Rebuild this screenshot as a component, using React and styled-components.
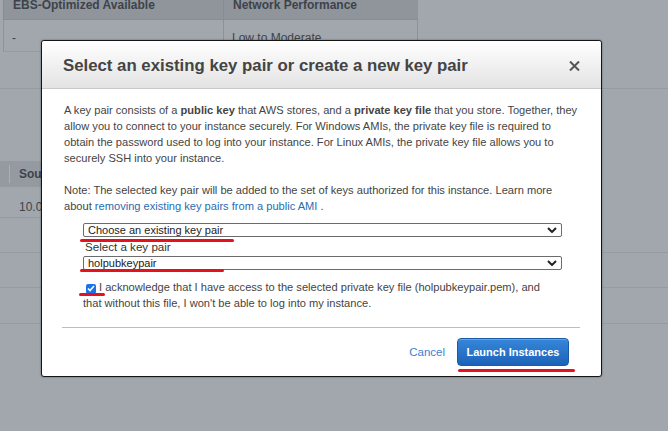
import React from "react";
import styled, { createGlobalStyle } from "styled-components";

const GlobalStyle = createGlobalStyle`
  html, body {
    margin: 0;
    padding: 0;
  }
  body {
    font-family: "Liberation Sans", Arial, sans-serif;
  }
`;

const Page = styled.div`
  position: relative;
  width: 668px;
  height: 431px;
  overflow: hidden;
  background: #a1a7ad;
`;

const TopSection = styled.div`
  height: 88px;
  border-bottom: 1px solid #959ba1;
`;

const TopTable = styled.div`
  width: 415px;
  margin-left: 3px;
  display: grid;
  grid-template-columns: 220px 195px;
`;

const HeadCell = styled.div`
  height: 20px;
  background: #8f959b;
  border-left: 1px solid #868c92;
  border-bottom: 1px solid #878d93;
  box-sizing: border-box;
  padding-left: 9px;
  font-size: 12px;
  font-weight: bold;
  line-height: 10px;
  color: #3e434a;
  &:last-child {
    border-right: 1px solid #868c92;
  }
`;

const DataCell = styled.div`
  height: 32px;
  border-left: 1px solid #8c9298;
  border-bottom: 1px solid #959ba1;
  box-sizing: border-box;
  padding: 11px 0 0 8px;
  font-size: 12px;
  color: #3e434a;
  &:last-child {
    border-right: 1px solid #8c9298;
  }
`;

const LowerSection = styled.div`
  padding-top: 72px;
`;

const LowerHead = styled.div`
  width: 560px;
  height: 26px;
  background: #949aa0;
  display: flex;
  align-items: center;
`;

const HeadDivider = styled.span`
  width: 1px;
  height: 18px;
  margin-left: 9px;
  background: #aab0b6;
`;

const LowerHeadText = styled.span`
  margin-left: 9px;
  font-size: 12px;
  font-weight: bold;
  color: #3e434a;
`;

const LowerRow = styled.div`
  width: ${(p) => p.$width || "668px"};
  height: ${(p) => p.$height}px;
  border-bottom: 1px solid #959ba1;
  box-sizing: border-box;
  padding: 13px 0 0 19px;
  font-size: 12px;
  color: #3e434a;
`;

// modal
const Modal = styled.div`
  position: absolute;
  left: 41px;
  top: 40px;
  width: 561px;
  height: 337px;
  box-sizing: border-box;
  background: #fff;
  border: 1px solid #151515;
  border-radius: 3px;
  box-shadow: 0 0 2px rgba(0, 0, 0, 0.45);
  display: flex;
  flex-direction: column;
  color: #444;
`;

const Header = styled.div`
  height: 48px;
  flex: none;
  box-sizing: border-box;
  padding: 2px 21px 0 21px;
  display: flex;
  align-items: center;
  justify-content: space-between;
  background: linear-gradient(#ffffff, #e3e3e3);
  border-bottom: 1px solid #c9c9c9;
  border-radius: 3px 3px 0 0;
`;

const Title = styled.h2`
  margin: 0;
  font-size: 16.8px;
  font-weight: bold;
  color: #444;
`;

const Close = styled.button`
  border: 0;
  padding: 0;
  background: none;
  display: flex;
  cursor: pointer;
`;

const Body = styled.div`
  padding: 13px 20px 0 22px;
  font-size: 11.1px;
  line-height: 16px;
`;

const Para = styled.p`
  margin: 0 0 ${(p) => p.$gap || 0}px;
`;

const Link = styled.a`
  color: #2a6cb0;
  text-decoration: none;
`;

const Fields = styled.div`
  margin: 0 19px 0 19px;
  display: flex;
  flex-direction: column;
`;

const SelectBox = styled.div`
  position: relative;
  height: 14px;
  box-sizing: border-box;
  border: 1px solid #6c6c6c;
  border-radius: 2px;
  padding: 0 4px;
  display: flex;
  align-items: center;
  justify-content: space-between;
  font-size: 11px;
  line-height: 12px;
  color: #222;
`;

const Label = styled.div`
  height: 19px;
  line-height: 19px;
  padding-left: 2px;
  font-size: 11.6px;
  color: #333;
`;

const Mark = styled.span`
  position: absolute;
  left: ${(p) => p.$left}px;
  top: ${(p) => p.$top}px;
  width: ${(p) => p.$width}px;
  height: 3px;
  border-radius: 2px;
  background: #e3121c;
`;

const Ack = styled.label`
  position: relative;
  display: block;
  margin-top: 9px;
  padding-right: 14px;
  color: #444;
`;

const Check = styled.span`
  display: inline-flex;
  align-items: center;
  justify-content: center;
  width: 10px;
  height: 10px;
  margin: 0 3px 0 3px;
  border-radius: 2px;
  background: #1a73e8;
  vertical-align: -1px;
`;

const Footer = styled.div`
  margin: auto 21px 0 20px;
  border-top: 1px solid #bdbdbd;
  padding: 10px 11px 10px 0;
  display: flex;
  justify-content: flex-end;
  align-items: center;
  gap: 12px;
`;

const CancelLink = styled.a`
  font-size: 11.5px;
  color: #3d7ed4;
  text-decoration: none;
`;

const LaunchWrap = styled.div`
  position: relative;
`;

const LaunchButton = styled.button`
  width: 112px;
  height: 28px;
  border: 1px solid #1a5aa6;
  border-radius: 4px;
  background: linear-gradient(#3686da, #1c63b8);
  box-shadow: inset 0 1px 0 rgba(255, 255, 255, 0.25);
  color: #fff;
  font-family: "Liberation Sans", Arial, sans-serif;
  font-size: 11px;
  font-weight: bold;
  cursor: pointer;
`;

const Chevron = () => (
  <svg width="10" height="6" viewBox="0 0 10 6">
    <path d="M1 1l4 4 4-4" fill="none" stroke="#222" strokeWidth="2" />
  </svg>
);

export default function App() {
  return (
    <>
      <GlobalStyle />
      <Page>
        <TopSection>
          <TopTable>
            <HeadCell>EBS-Optimized Available</HeadCell>
            <HeadCell>Network Performance</HeadCell>
            <DataCell>-</DataCell>
            <DataCell>Low to Moderate</DataCell>
          </TopTable>
        </TopSection>
        <LowerSection>
          <LowerHead>
            <HeadDivider />
            <LowerHeadText>Sou</LowerHeadText>
          </LowerHead>
          <LowerRow $height={31} $width="560px">10.0</LowerRow>
          <LowerRow $height={35} />
          <LowerRow $height={35} />
          <LowerRow $height={36} />
        </LowerSection>

        <Modal>
          <Header>
            <Title>Select an existing key pair or create a new key pair</Title>
            <Close aria-label="Close">
              <svg width="11" height="10" viewBox="0 0 11 10">
                <path d="M1 0.5l9 9M10 0.5l-9 9" stroke="#555" strokeWidth="2" />
              </svg>
            </Close>
          </Header>
          <Body>
            <Para $gap={16}>
              A key pair consists of a <b>public key</b> that AWS stores, and a{" "}
              <b>private key file</b> that you store. Together, they allow you to
              connect to your instance securely. For Windows AMIs, the private key
              file is required to obtain the password used to log into your
              instance. For Linux AMIs, the private key file allows you to
              securely SSH into your instance.
            </Para>
            <Para $gap={9}>
              Note: The selected key pair will be added to the set of keys
              authorized for this instance. Learn more about{" "}
              <Link href="#">removing existing key pairs from a public AMI</Link> .
            </Para>
            <Fields>
              <SelectBox>
                <span>Choose an existing key pair</span>
                <Chevron />
                <Mark $left={-4} $top={15} $width={154} />
              </SelectBox>
              <Label>Select a key pair</Label>
              <SelectBox>
                <span>holpubkeypair</span>
                <Chevron />
                <Mark $left={-4} $top={12} $width={144} />
              </SelectBox>
              <Ack>
                <Check>
                  <svg width="8" height="7" viewBox="0 0 8 7">
                    <path d="M1 3.5l2 2 4-4.5" fill="none" stroke="#fff" strokeWidth="1.6" />
                  </svg>
                </Check>
                I acknowledge that I have access to the selected private key file
                (holpubkeypair.pem), and that without this file, I won't be able to
                log into my instance.
                <Mark $left={-4} $top={14} $width={26} />
              </Ack>
            </Fields>
          </Body>
          <Footer>
            <CancelLink href="#">Cancel</CancelLink>
            <LaunchWrap>
              <LaunchButton>Launch Instances</LaunchButton>
              <Mark $left={1} $top={31} $width={117} />
            </LaunchWrap>
          </Footer>
        </Modal>
      </Page>
    </>
  );
}
